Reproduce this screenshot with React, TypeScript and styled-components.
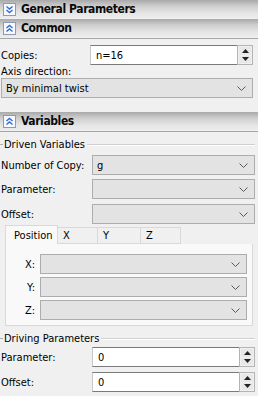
import { createGlobalStyle } from "styled-components";
import styled from "styled-components";

const Global = createGlobalStyle`
  html, body { margin: 0; padding: 0; background: #f0f0f0; }
  body { font-family: "DejaVu Sans Condensed", "Liberation Sans", Arial, sans-serif; font-size: 11px; color: #000; }
`;

const Page = styled.div`
  width: 258px;
  height: 396px;
  overflow: hidden;
  background: #f0f0f0;
  display: flex;
  flex-direction: column;
`;

const Header = styled.div<{ $gap?: number }>`
  height: 18px;
  margin-top: ${(p) => p.$gap ?? 0}px;
  display: flex;
  align-items: center;
  gap: 5px;
  padding-left: 3px;
  background: linear-gradient(180deg, #a9a9a9 0%, #cfcfcf 35%, #e6e6e6 75%, #ececec 100%);
  font-weight: bold;
  font-size: 12px;
  letter-spacing: -0.4px;
  color: #0a0a0a;
`;

const Icon = styled.span`
  width: 11px;
  height: 11px;
  border: 1px solid #8c9bb0;
  background: #f7f9fc;
  display: flex;
  align-items: center;
  justify-content: center;
`;

const Rule = styled.div`
  height: 1px;
  margin-top: 1px;
  background: #a6a6a6;
`;

const Body = styled.div<{ $pad: string }>`
  padding: ${(p) => p.$pad};
  display: flex;
  flex-direction: column;
`;

const Row = styled.div<{ $h?: number; $mt?: number; $lw?: number }>`
  display: grid;
  grid-template-columns: ${(p) => p.$lw ?? 91}px 1fr;
  align-items: center;
  height: ${(p) => p.$h ?? 20}px;
  margin-top: ${(p) => p.$mt ?? 0}px;
`;

const Label = styled.span<{ $right?: boolean }>`
  padding-left: 1px;
  text-align: ${(p) => (p.$right ? "right" : "left")};
  padding-right: ${(p) => (p.$right ? 5 : 0)}px;
  white-space: nowrap;
`;

const Field = styled.div`
  height: 20px;
  box-sizing: border-box;
  display: flex;
  align-items: center;
`;

const Input = styled(Field)`
  background: #fff;
  border-top: 1px solid #7a7a7a;
  border-bottom: 1px solid #7a7a7a;
  border-left: 1px solid #c8c8c8;
  padding-left: 5px;
  position: relative;
`;

const Combo = styled(Field)`
  background: #e3e3e3;
  border: 1px solid #adadad;
  padding: 0 6px 0 4px;
  justify-content: space-between;
`;

const Spin = styled.div`
  position: absolute;
  right: 0;
  top: -1px;
  bottom: -1px;
  width: 16px;
  box-sizing: border-box;
  border: 1px solid #b4b4b4;
  background: #f0f0f0;
  display: grid;
  grid-template-rows: 1fr 1fr;
  padding: 1px;
  gap: 1px;
`;

const SpinHalf = styled.div`
  background: #e8e8e8;
  display: flex;
  align-items: center;
  justify-content: center;
`;

const Legend = styled.div<{ $mt: number }>`
  display: flex;
  align-items: center;
  margin-top: ${(p) => p.$mt}px;
  height: 14px;
  &::before {
    content: "";
    width: 3px;
    height: 1px;
    background: #b0b0b0;
    margin-right: 1px;
  }
  &::after {
    content: "";
    flex: 1;
    height: 1px;
    background: #d0d0d0;
    box-shadow: 0 1px 0 #ffffff;
    margin-left: 2px;
  }
`;

const Tabs = styled.div`
  margin: 1px 0 0 5px;
  display: flex;
  align-items: flex-end;
  height: 19px;
`;

const Tab = styled.div<{ $active?: boolean; $w: number }>`
  width: ${(p) => p.$w}px;
  height: ${(p) => (p.$active ? 19 : 17)}px;
  box-sizing: border-box;
  padding-left: ${(p) => (p.$active ? 8 : 5)}px;
  display: flex;
  align-items: center;
  background: ${(p) => (p.$active ? "#f9f9f9" : "#f0f0f0")};
  border: 1px solid #d9d9d9;
  border-bottom: ${(p) => (p.$active ? "none" : "1px solid #d9d9d9")};
  border-left: ${(p) => (p.$active ? "1px solid #d9d9d9" : "none")};
`;

const Panel = styled.div`
  margin: 0 5px 0 5px;
  height: 82px;
  box-sizing: border-box;
  background: #f9f9f9;
  border: 1px solid #d9d9d9;
  border-top: none;
  padding: 10px 5px 0 0;
  display: flex;
  flex-direction: column;
  gap: 3px;
`;

const Chevron = () => (
  <svg width="9" height="5" viewBox="0 0 9 5">
    <path d="M0.5 0.5 L4.5 4.5 L8.5 0.5" fill="none" stroke="#5a5a5a" strokeWidth="1" />
  </svg>
);

const Arrow = ({ up }: { up?: boolean }) => (
  <svg width="7" height="4" viewBox="0 0 7 4">
    <path d={up ? "M0 4 L3.5 0 L7 4 Z" : "M0 0 L3.5 4 L7 0 Z"} fill="#222" />
  </svg>
);

const DoubleChev = ({ up }: { up?: boolean }) => (
  <svg width="9" height="9" viewBox="0 0 9 9">
    <path
      d={up ? "M1.5 4 L4.5 1.5 L7.5 4 M1.5 7.5 L4.5 5 L7.5 7.5" : "M1.5 1.5 L4.5 4 L7.5 1.5 M1.5 5 L4.5 7.5 L7.5 5"}
      fill="none"
      stroke="#2d6cd6"
      strokeWidth="1.4"
    />
  </svg>
);

function SpinInput({ value }: { value: string }) {
  return (
    <Input>
      {value}
      <Spin>
        <SpinHalf><Arrow up /></SpinHalf>
        <SpinHalf><Arrow /></SpinHalf>
      </Spin>
    </Input>
  );
}

function Select({ value }: { value?: string }) {
  return (
    <Combo>
      <span>{value ?? ""}</span>
      <Chevron />
    </Combo>
  );
}

export default function App() {
  return (
    <Page>
      <Global />
      <Header>
        <Icon><DoubleChev /></Icon>
        General Parameters
      </Header>
      <Header $gap={1}>
        <Icon><DoubleChev up /></Icon>
        Common
      </Header>
      <Rule />
      <Body $pad="6px 5px 0 0">
        <Row $lw={90}>
          <Label>Copies:</Label>
          <SpinInput value="n=16" />
        </Row>
        <Row $h={13}>
          <Label>Axis direction:</Label>
        </Row>
        <Row $lw={1}>
          <span />
          <Select value="By minimal twist" />
        </Row>
      </Body>
      <Header $gap={14}>
        <Icon><DoubleChev up /></Icon>
        Variables
      </Header>
      <Rule />
      <Body $pad="3px 3px 0 0">
        <Legend $mt={2}>Driven Variables</Legend>
        <Row $mt={4} $lw={92}>
          <Label>Number of Copy:</Label>
          <Select value="g" />
        </Row>
        <Row $mt={4} $lw={92}>
          <Label>Parameter:</Label>
          <Select />
        </Row>
        <Row $mt={5} $lw={92}>
          <Label>Offset:</Label>
          <Select />
        </Row>
      </Body>
      <Tabs>
        <Tab $active $w={53}>Position</Tab>
        <Tab $w={40}>X</Tab>
        <Tab $w={43}>Y</Tab>
        <Tab $w={40}>Z</Tab>
      </Tabs>
      <Panel>
        <Row $lw={34}>
          <Label $right>X:</Label>
          <Select />
        </Row>
        <Row $lw={34}>
          <Label $right>Y:</Label>
          <Select />
        </Row>
        <Row $lw={34}>
          <Label $right>Z:</Label>
          <Select />
        </Row>
      </Panel>
      <Body $pad="0 3px 0 0">
        <Legend $mt={5}>Driving Parameters</Legend>
        <Row $mt={2} $lw={92}>
          <Label>Parameter:</Label>
          <SpinInput value="0" />
        </Row>
        <Row $mt={5} $lw={92}>
          <Label>Offset:</Label>
          <SpinInput value="0" />
        </Row>
      </Body>
    </Page>
  );
}
